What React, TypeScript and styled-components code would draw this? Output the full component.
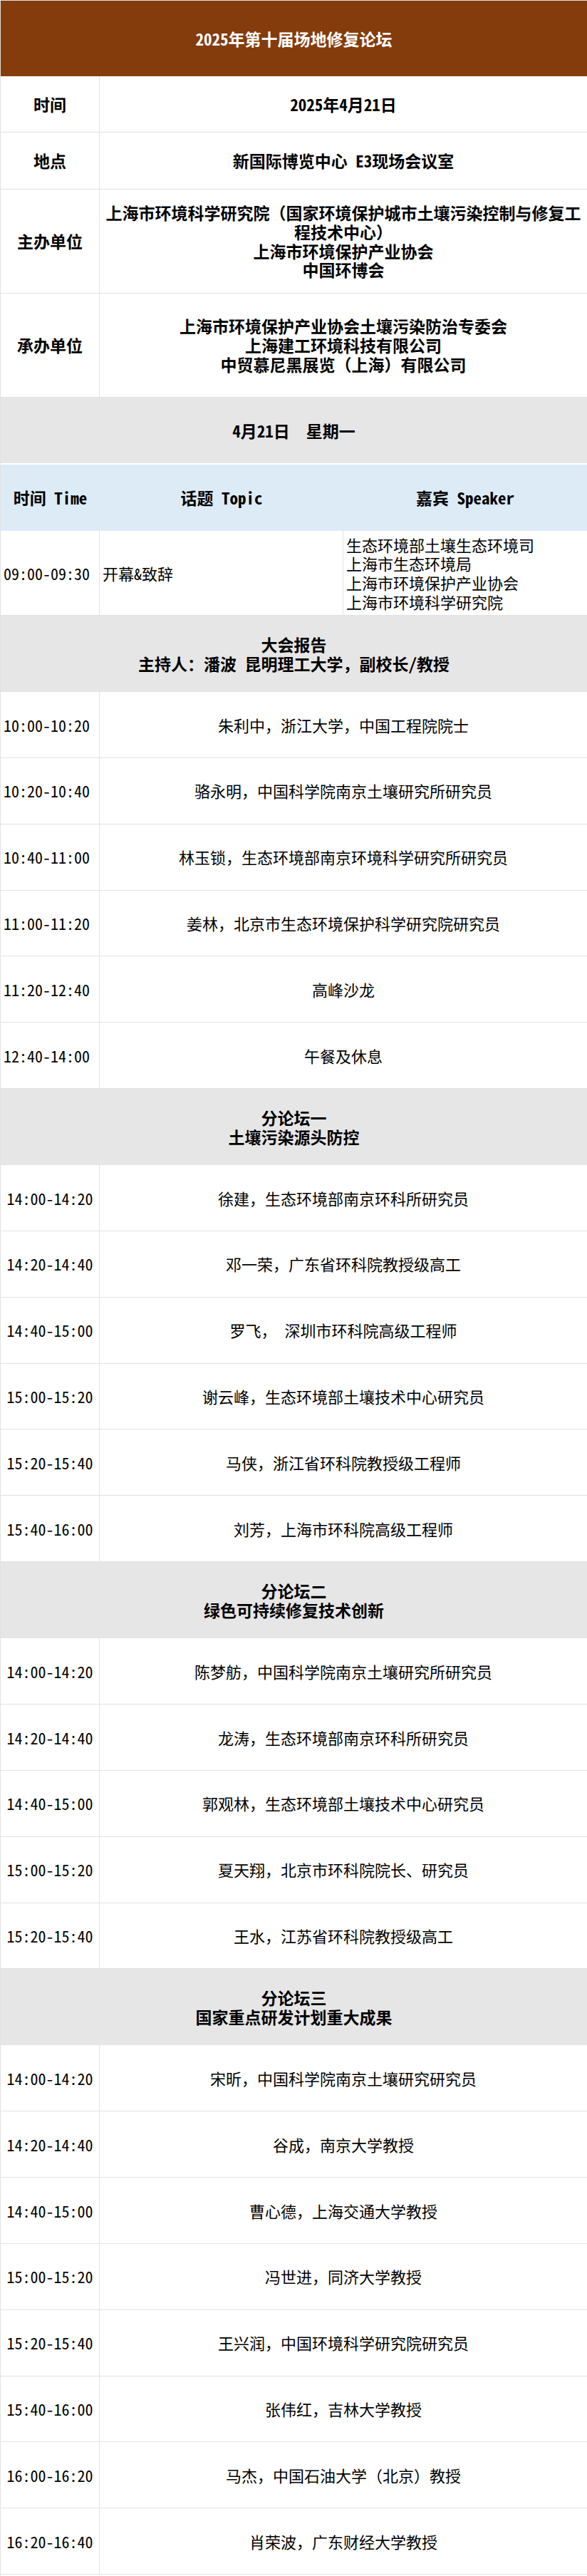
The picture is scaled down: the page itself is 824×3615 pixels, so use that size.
import React from 'react';
import styled, { createGlobalStyle } from 'styled-components';

const LINE = '#e2e2e2';
const GRAY = '#e7e6e6';
const BLUE = '#ddebf7';
const BROWN = '#843c0c';

const GlobalStyle = createGlobalStyle`
  html, body { margin: 0; padding: 0; background: #ffffff; }
  body {
    font-family: "Noto Sans Mono CJK SC", "Noto Sans CJK SC", "DejaVu Sans Mono", monospace;
    color: #000000;
  }
`;

const Sheet = styled.div`
  width: 824px;
  box-sizing: border-box;
  border-top: 1px solid ${LINE};
  border-left: 1px solid ${LINE};
  padding-bottom: 2px;
  font-size: 22px;
  line-height: 26.7px;
`;

const TitleBar = styled.header`
  height: 106px;
  background: ${BROWN};
  color: #ffffff;
  display: flex;
  align-items: center;
  justify-content: center;
  font-weight: 700;
  font-size: 23px;
`;

const InfoRow = styled.div<{ $h: number }>`
  display: grid;
  grid-template-columns: 139px 1fr;
  height: ${(p) => p.$h}px;
  box-sizing: border-box;
  border-bottom: 1px solid ${LINE};
`;

const InfoLabel = styled.div`
  display: flex;
  align-items: center;
  justify-content: center;
  border-right: 1px solid ${LINE};
  font-weight: 700;
  font-size: 23px;
`;

const InfoValue = styled.div`
  display: flex;
  flex-direction: column;
  align-items: center;
  justify-content: center;
  text-align: center;
  padding: 0 6px;
  font-weight: 700;
  font-size: 23px;
`;

const DayBand = styled.div`
  height: 94px;
  box-sizing: border-box;
  border-bottom: 2px solid #ffffff;
  background: ${GRAY};
  display: flex;
  align-items: center;
  justify-content: center;
  font-weight: 700;
  font-size: 23px;
`;

const HeadRow = styled.div`
  display: grid;
  grid-template-columns: 139px 342px 1fr;
  height: 93px;
  background: ${BLUE};
  font-weight: 700;
  font-size: 23px;
`;

const HeadCell = styled.div`
  display: flex;
  align-items: center;
  justify-content: center;
`;

const OpeningRow = styled.div`
  display: grid;
  grid-template-columns: 139px 342px 1fr;
  height: 119px;
  box-sizing: border-box;
  border-bottom: 1px solid ${LINE};
`;

const PlainCell = styled.div<{ $divider?: boolean }>`
  display: flex;
  flex-direction: column;
  justify-content: center;
  align-items: flex-start;
  padding: 0 4px;
  border-right: ${(p) => (p.$divider ? `1px solid ${LINE}` : 'none')};
`;

const SectionBand = styled.div`
  height: 107px;
  background: ${GRAY};
  display: flex;
  flex-direction: column;
  align-items: center;
  justify-content: center;
  text-align: center;
  font-weight: 700;
  font-size: 23px;
`;

const TalkRow = styled.div`
  display: grid;
  grid-template-columns: 139px 1fr;
  height: 92.85px;
  box-sizing: border-box;
  border-bottom: 1px solid ${LINE};
`;

const TimeCell = styled.div<{ $align: 'left' | 'center' }>`
  display: flex;
  align-items: center;
  justify-content: ${(p) => (p.$align === 'left' ? 'flex-start' : 'center')};
  padding: 0 ${(p) => (p.$align === 'left' ? '4px' : '0')};
  border-right: 1px solid ${LINE};
  white-space: nowrap;
`;

const TalkCell = styled.div`
  display: flex;
  align-items: center;
  justify-content: center;
  text-align: center;
  white-space: nowrap;
`;

type Talk = [string, string];
type Section = { title: string; sub: string; align: 'left' | 'center'; talks: Talk[] };

const sections: Section[] = [
  {
    title: '大会报告',
    sub: '主持人：潘波 昆明理工大学，副校长/教授',
    align: 'left',
    talks: [
      ['10:00-10:20', '朱利中，浙江大学，中国工程院院士'],
      ['10:20-10:40', '骆永明，中国科学院南京土壤研究所研究员'],
      ['10:40-11:00', '林玉锁，生态环境部南京环境科学研究所研究员'],
      ['11:00-11:20', '姜林，北京市生态环境保护科学研究院研究员'],
      ['11:20-12:40', '高峰沙龙'],
      ['12:40-14:00', '午餐及休息'],
    ],
  },
  {
    title: '分论坛一',
    sub: '土壤污染源头防控',
    align: 'center',
    talks: [
      ['14:00-14:20', '徐建，生态环境部南京环科所研究员'],
      ['14:20-14:40', '邓一荣，广东省环科院教授级高工'],
      ['14:40-15:00', '罗飞， 深圳市环科院高级工程师'],
      ['15:00-15:20', '谢云峰，生态环境部土壤技术中心研究员'],
      ['15:20-15:40', '马侠，浙江省环科院教授级工程师'],
      ['15:40-16:00', '刘芳，上海市环科院高级工程师'],
    ],
  },
  {
    title: '分论坛二',
    sub: '绿色可持续修复技术创新',
    align: 'center',
    talks: [
      ['14:00-14:20', '陈梦舫，中国科学院南京土壤研究所研究员'],
      ['14:20-14:40', '龙涛，生态环境部南京环科所研究员'],
      ['14:40-15:00', '郭观林，生态环境部土壤技术中心研究员'],
      ['15:00-15:20', '夏天翔，北京市环科院院长、研究员'],
      ['15:20-15:40', '王水，江苏省环科院教授级高工'],
    ],
  },
  {
    title: '分论坛三',
    sub: '国家重点研发计划重大成果',
    align: 'center',
    talks: [
      ['14:00-14:20', '宋昕，中国科学院南京土壤研究研究员'],
      ['14:20-14:40', '谷成，南京大学教授'],
      ['14:40-15:00', '曹心德，上海交通大学教授'],
      ['15:00-15:20', '冯世进，同济大学教授'],
      ['15:20-15:40', '王兴润，中国环境科学研究院研究员'],
      ['15:40-16:00', '张伟红，吉林大学教授'],
      ['16:00-16:20', '马杰，中国石油大学（北京）教授'],
      ['16:20-16:40', '肖荣波，广东财经大学教授'],
    ],
  },
];

const openingSpeakers = [
  '生态环境部土壤生态环境司',
  '上海市生态环境局',
  '上海市环境保护产业协会',
  '上海市环境科学研究院',
];

export default function App() {
  return (
    <>
      <GlobalStyle />
      <Sheet>
        <TitleBar>2025年第十届场地修复论坛</TitleBar>
        <InfoRow $h={79}>
          <InfoLabel>时间</InfoLabel>
          <InfoValue>2025年4月21日</InfoValue>
        </InfoRow>
        <InfoRow $h={80}>
          <InfoLabel>地点</InfoLabel>
          <InfoValue>新国际博览中心 E3现场会议室</InfoValue>
        </InfoRow>
        <InfoRow $h={146}>
          <InfoLabel>主办单位</InfoLabel>
          <InfoValue>
            <div>上海市环境科学研究院（国家环境保护城市土壤污染控制与修复工程技术中心）</div>
            <div>上海市环境保护产业协会</div>
            <div>中国环博会</div>
          </InfoValue>
        </InfoRow>
        <InfoRow $h={146}>
          <InfoLabel>承办单位</InfoLabel>
          <InfoValue>
            <div>上海市环境保护产业协会土壤污染防治专委会</div>
            <div>上海建工环境科技有限公司</div>
            <div>中贸慕尼黑展览（上海）有限公司</div>
          </InfoValue>
        </InfoRow>
        <DayBand>4月21日　星期一</DayBand>
        <HeadRow>
          <HeadCell>时间 Time</HeadCell>
          <HeadCell>话题 Topic</HeadCell>
          <HeadCell>嘉宾 Speaker</HeadCell>
        </HeadRow>
        <OpeningRow>
          <PlainCell $divider>09:00-09:30</PlainCell>
          <PlainCell $divider>开幕&amp;致辞</PlainCell>
          <PlainCell>
            {openingSpeakers.map((s) => (
              <div key={s}>{s}</div>
            ))}
          </PlainCell>
        </OpeningRow>
        {sections.map((sec) => (
          <React.Fragment key={sec.title}>
            <SectionBand>
              <div>{sec.title}</div>
              <div>{sec.sub}</div>
            </SectionBand>
            {sec.talks.map(([time, text]) => (
              <TalkRow key={sec.title + time}>
                <TimeCell $align={sec.align}>{time}</TimeCell>
                <TalkCell>{text}</TalkCell>
              </TalkRow>
            ))}
          </React.Fragment>
        ))}
      </Sheet>
    </>
  );
}
